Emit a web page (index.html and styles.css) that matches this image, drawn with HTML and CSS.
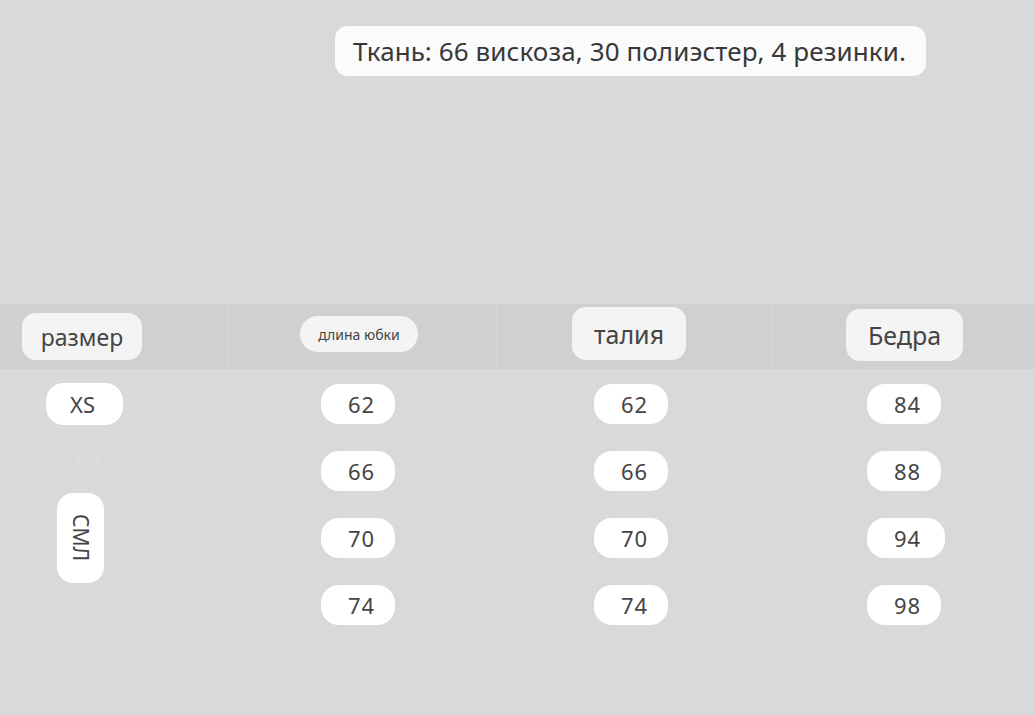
FILE: index.html
```html
<!DOCTYPE html>
<html lang="ru">
<head>
<meta charset="utf-8">
<title>Размеры</title>
<link rel="stylesheet" href="styles.css">
</head>
<body>
<div class="page">
  <div class="top">
    <div class="fabric">Ткань: 66 вискоза, 30 полиэстер, 4 резинки.</div>
  </div>
  <div class="head">
    <div class="hcell h1"><span class="hpill hp1">размер</span></div>
    <div class="hcell h2"><span class="hpill hp2">длина юбки</span></div>
    <div class="hcell h3"><span class="hpill hp3">талия</span></div>
    <div class="hcell h4"><span class="hpill hp4">Бедра</span></div>
  </div>
  <div class="body">
    <span class="pill c1 r1 xs">XS</span>
    <span class="ghost g1"></span>
    <span class="pill c1 vert">СМЛ</span>
    <span class="ghost g2"></span>

    <span class="pill c2 r1">62</span>
    <span class="pill c2 r2">66</span>
    <span class="pill c2 r3">70</span>
    <span class="pill c2 r4">74</span>

    <span class="pill c3 r1">62</span>
    <span class="pill c3 r2">66</span>
    <span class="pill c3 r3">70</span>
    <span class="pill c3 r4">74</span>

    <span class="pill c4 r1">84</span>
    <span class="pill c4 r2">88</span>
    <span class="pill c4 r3 wide">94</span>
    <span class="pill c4 r4">98</span>
  </div>
</div>
</body>
</html>
```
FILE: styles.css
```css
html, body {
  margin: 0;
  padding: 0;
}
body {
  background: #d9d9d9;
  font-family: "Noto Sans", "Open Sans", sans-serif;
  color: #3a3a3a;
}
.page {
  width: 1035px;
  height: 715px;
  overflow: hidden;
}
.top {
  padding-top: 26px;
  padding-left: 335px;
  height: 304px;
  box-sizing: border-box;
}
.fabric {
  width: 591px;
  height: 50px;
  box-sizing: border-box;
  padding-left: 18px;
  background: #fbfbfb;
  border-radius: 13px;
  font-size: 26px;
  line-height: 50px;
  color: #383838;
  letter-spacing: 0.1px;
  white-space: nowrap;
}
.head {
  display: grid;
  grid-template-columns: 228px 269px 275px 263px;
  height: 65px;
  background: #d0d0d0;
}
.hcell {
  display: flex;
  align-items: flex-start;
  border-right: 1px solid rgba(255,255,255,0.12);
}
.hcell.h4 { border-right: none; }
.hpill {
  background: #f4f4f4;
  color: #444;
  display: flex;
  align-items: center;
  justify-content: center;
  box-sizing: border-box;
}
.hp1 {
  margin: 9px 0 0 22px;
  width: 120px;
  height: 47px;
  border-radius: 14px;
  font-size: 23px;
}
.hp2 {
  margin: 12px 0 0 72px;
  width: 118px;
  height: 36px;
  border-radius: 18px;
  font-size: 14px;
}
.hp3 {
  margin: 3px 0 0 75px;
  width: 114px;
  height: 53px;
  border-radius: 14px;
  font-size: 25px;
}
.hp4 {
  margin: 5px 0 0 74px;
  width: 117px;
  height: 52px;
  border-radius: 14px;
  font-size: 25px;
}
.body {
  display: grid;
  grid-template-columns: 228px 269px 275px 263px;
  grid-template-rows: repeat(4, 67px);
  padding-top: 1px;
}
.pill {
  align-self: center;
  justify-self: start;
  background: #ffffff;
  height: 40px;
  border-radius: 18px;
  box-sizing: border-box;
  padding: 0 20px 0 27px;
  font-size: 22px;
  letter-spacing: 1px;
  line-height: 40px;
  color: #444;
}
.c1 { grid-column: 1; }
.c2 { grid-column: 2; margin-left: 93px; }
.c3 { grid-column: 3; margin-left: 97px; }
.c4 { grid-column: 4; margin-left: 95px; }
.r1 { grid-row: 1; }
.r2 { grid-row: 2; }
.r3 { grid-row: 3; }
.r4 { grid-row: 4; }
.xs {
  margin-left: 46px;
  width: 77px;
  height: 42px;
  line-height: 42px;
  padding: 0 0 0 24px;
  letter-spacing: 0;
}
.wide { padding-right: 24px; }
.vert {
  grid-row: 2 / 5;
  margin-left: 57px;
  width: 47px;
  height: 90px;
  padding: 0;
  border-radius: 16px;
  writing-mode: vertical-rl;
  display: flex;
  align-items: center;
  justify-content: center;
  line-height: 1;
  letter-spacing: 0;
  font-size: 21px;
}
.ghost {
  grid-column: 1;
  justify-self: start;
  margin-left: 74px;
  width: 28px;
  border-radius: 12px;
  background: rgba(255,255,255,0.06);
}
.g1 {
  grid-row: 2;
  align-self: start;
  margin-top: 16px;
  height: 28px;
}
.g2 {
  grid-row: 4;
  align-self: end;
  margin-bottom: 12px;
  height: 34px;
}
```
